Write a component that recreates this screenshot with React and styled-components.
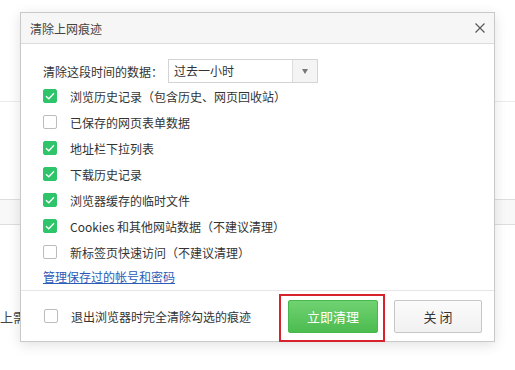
import React from "react";
import styled, { createGlobalStyle } from "styled-components";

const GlobalStyle = createGlobalStyle`
  html, body {
    margin: 0;
    padding: 0;
    background: #fff;
  }
  body {
    font-family: "Noto Sans CJK SC", "Noto Sans", "Liberation Sans", sans-serif;
    font-size: 12px;
    color: #333;
  }
`;

const items = [
  { label: "浏览历史记录（包含历史、网页回收站）", checked: true },
  { label: "已保存的网页表单数据", checked: false },
  { label: "地址栏下拉列表", checked: true },
  { label: "下载历史记录", checked: true },
  { label: "浏览器缓存的临时文件", checked: true },
  { label: "Cookies 和其他网站数据（不建议清理）", checked: true },
  { label: "新标签页快速访问（不建议清理）", checked: false },
];

const Check = ({ checked }) => (
  <Box $checked={checked}>
    {checked && (
      <svg width="10" height="8" viewBox="0 0 10 8">
        <path d="M1 4.2 L3.8 6.8 L9 1.2" fill="none" stroke="#fff" strokeWidth="1.3" />
      </svg>
    )}
  </Box>
);

export default function App() {
  return (
    <Page>
      <GlobalStyle />
      <Backdrop>
        <Rule />
        <Band />
        <BgText>上需</BgText>
      </Backdrop>

      <Dialog>
        <Header>
          <Title>清除上网痕迹</Title>
          <Close>
            <svg width="10" height="10" viewBox="0 0 10 10">
              <path d="M0.5 0.5 L9.5 9.5 M9.5 0.5 L0.5 9.5" stroke="#555" strokeWidth="1.1" />
            </svg>
          </Close>
        </Header>
        <Body>
          <RangeRow>
            <span>清除这段时间的数据：</span>
            <Select>
              <SelectText>过去一小时</SelectText>
              <Arrow />
            </Select>
          </RangeRow>
          {items.map((it, i) => (
            <Row key={i}>
              <Check checked={it.checked} />
              <span>{it.label}</span>
            </Row>
          ))}
          <Link>管理保存过的帐号和密码</Link>
        </Body>
        <Footer>
          <Row as="div">
            <Check checked={false} />
            <span>退出浏览器时完全清除勾选的痕迹</span>
          </Row>
          <Buttons>
            <Button $primary>立即清理</Button>
            <Button>关 闭</Button>
          </Buttons>
        </Footer>
      </Dialog>

      <Highlight />
    </Page>
  );
}

const Page = styled.div`
  position: relative;
  width: 515px;
  height: 370px;
  overflow: hidden;
  background: #fff;
`;

const Backdrop = styled.div`
  display: flex;
  flex-direction: column;
`;

const Rule = styled.div`
  margin-top: 101px;
  height: 1px;
  background: #ececec;
`;

const Band = styled.div`
  margin-top: 97px;
  height: 24px;
  border-top: 1px solid #dedede;
  border-bottom: 1px solid #dedede;
  background: #f8f8f8;
`;

const BgText = styled.div`
  margin-top: 83px;
  padding-left: 0;
  font-size: 13px;
  line-height: 18px;
  color: #444;
  white-space: nowrap;
`;

const Dialog = styled.div`
  position: absolute;
  left: 20px;
  top: 12px;
  width: 475px;
  height: 330px;
  box-sizing: border-box;
  border: 1px solid #c9c9c9;
  background: #fff;
  box-shadow: 0 3px 12px rgba(0, 0, 0, 0.12);
  display: flex;
  flex-direction: column;
`;

const Header = styled.div`
  height: 30px;
  border-bottom: 1px solid #dcdcdc;
  background: #f6f6f6;
  display: flex;
  align-items: center;
  justify-content: space-between;
  padding: 0 9px 0 9px;
`;

const Title = styled.div`
  font-size: 12px;
  color: #444;
`;

const Close = styled.div`
  width: 10px;
  height: 10px;
  display: flex;
`;

const Body = styled.div`
  flex: 1;
  padding: 15px 22px 0 22px;
  display: flex;
  flex-direction: column;
`;

const RangeRow = styled.div`
  display: flex;
  align-items: center;
  gap: 5px;
  height: 24px;
`;

const Select = styled.div`
  width: 150px;
  height: 24px;
  box-sizing: border-box;
  border: 1px solid #d4d4d4;
  display: flex;
  background: #fff;
`;

const SelectText = styled.div`
  flex: 1;
  padding-left: 5px;
  line-height: 22px;
  color: #333;
`;

const Arrow = styled.div`
  width: 24px;
  border-left: 1px solid #dcdcdc;
  background: #f4f4f4;
  position: relative;

  &::after {
    content: "";
    position: absolute;
    left: 9px;
    top: 9px;
    border-left: 3px solid transparent;
    border-right: 3px solid transparent;
    border-top: 5px solid #777;
  }
`;

const Row = styled.label`
  display: flex;
  align-items: center;
  gap: 13px;
  height: 26px;
  white-space: nowrap;
`;

const Box = styled.span`
  width: 14px;
  height: 14px;
  box-sizing: border-box;
  border-radius: 2px;
  border: 1px solid ${(p) => (p.$checked ? "#2ec46a" : "#bcbcbc")};
  background: ${(p) => (p.$checked ? "#2ec46a" : "#fff")};
  display: flex;
  align-items: center;
  justify-content: center;
  flex: none;
`;

const Link = styled.a`
  height: 24px;
  line-height: 24px;
  color: #2a5cb8;
  text-decoration: underline;
  cursor: pointer;
`;

const Footer = styled.div`
  height: 50px;
  border-top: 1px solid #e6e6e6;
  display: flex;
  align-items: center;
  justify-content: space-between;
  padding: 0 12px 0 23px;
`;

const Buttons = styled.div`
  display: flex;
  gap: 16px;
`;

const Button = styled.button`
  width: ${(p) => (p.$primary ? "90px" : "88px")};
  height: 33px;
  box-sizing: border-box;
  border-radius: 2px;
  font-family: inherit;
  font-size: 13px;
  border: 1px solid ${(p) => (p.$primary ? "#47b94c" : "#c6c6c6")};
  color: ${(p) => (p.$primary ? "#fff" : "#333")};
  background: ${(p) =>
    p.$primary
      ? "linear-gradient(#70d271, #4cbc50)"
      : "linear-gradient(#fbfbfb, #f1f1f1)"};
  cursor: pointer;
`;

const Highlight = styled.div`
  position: absolute;
  left: 279px;
  top: 294px;
  width: 106px;
  height: 48px;
  box-sizing: border-box;
  border: 2px solid #d8232c;
`;
